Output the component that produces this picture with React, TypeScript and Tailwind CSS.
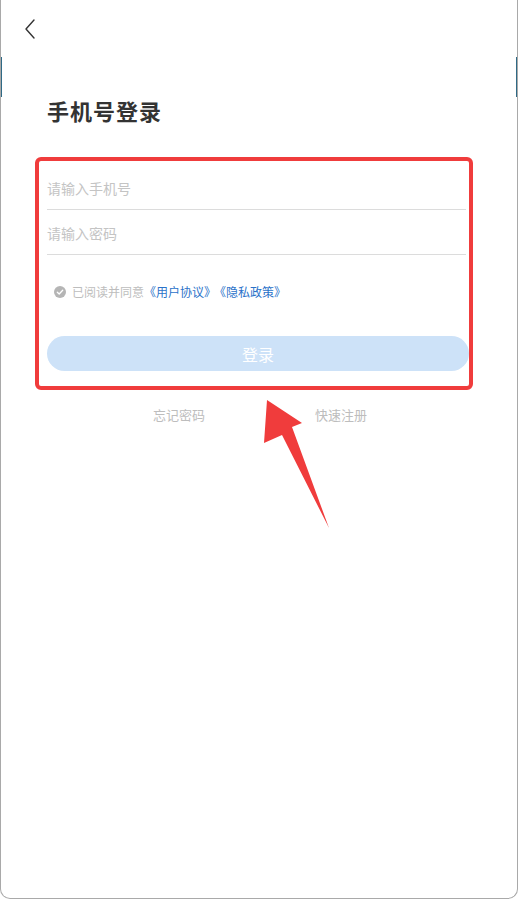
import React from "react";

const font = { fontFamily: '"Noto Sans CJK SC", "Noto Sans", sans-serif' };

const App = () => {
    return (
        <div style={font} className="relative w-[518px] h-[899px] bg-white border-x border-b border-[#a9a9a9] rounded-b-[10px] overflow-hidden">
            {/* bits of the desktop peeking past the window edge */}
            <div className="absolute left-0 top-[57px] w-px h-[40px] bg-[#2f6a86]" />
            <div className="absolute right-0 top-[57px] w-px h-[40px] bg-[#2f6a86]" />

            <div className="pt-[18px] pl-[22px]">
                <button className="text-[#333]">
                    <svg width="14" height="22" viewBox="0 0 14 22" fill="none">
                        <path d="M11 2 L3 11 L11 20" stroke="#333" strokeWidth="1.4" strokeLinecap="round" strokeLinejoin="round" />
                    </svg>
                </button>
            </div>

            <div className="pl-[46px] pr-[51px]">
                <h1 className="mt-[50px] text-[22px] leading-[30px] font-bold text-[#333] tracking-[1px]">手机号登录</h1>

                <div className="mt-[40px]">
                    <div className="h-[45px] flex items-center border-b border-[#dcdcdc]">
                        <span className="text-[14px] text-[#c4c4c4] pt-[2px]">请输入手机号</span>
                    </div>
                    <div className="h-[45px] flex items-center border-b border-[#dcdcdc]">
                        <span className="text-[14px] text-[#c4c4c4] pt-[2px]">请输入密码</span>
                    </div>
                </div>

                <div className="mt-[28px] pl-[7px] flex items-center gap-[6px] text-[12px]">
                    <svg width="12" height="12" viewBox="0 0 12 12">
                        <circle cx="6" cy="6" r="6" fill="#b5b5b5" />
                        <path d="M3.3 6.2 L5.2 8 L8.7 4.3" stroke="#fff" strokeWidth="1.3" fill="none" strokeLinecap="round" strokeLinejoin="round" />
                    </svg>
                    <span className="text-[#bdbdbd]">
                        已阅读并同意
                        <span className="text-[#2a72c9]">《用户协议》</span>
                        <span className="text-[#2a72c9] ml-[4px]">《隐私政策》</span>
                    </span>
                </div>

                <button className="mt-[35px] w-[422px] h-[35px] rounded-full bg-[#cde2f8] text-white text-[16px]">登录</button>

                <div className="mt-[34px] flex text-[13px] text-[#bdbdbd]">
                    <span className="ml-[106px]">忘记密码</span>
                    <span className="ml-[110px]">快速注册</span>
                </div>
            </div>

            {/* annotation overlay */}
            <div className="absolute left-[34px] top-[157px] w-[438px] h-[233px] border-[4px] border-[#f03c3c] rounded-[6px] pointer-events-none" />
            <svg className="absolute left-0 top-0 pointer-events-none" width="518" height="899">
                <polygon points="266,400 301,423 291,427 328,528 281,435 263,443" fill="#f03c3c" />
            </svg>
        </div>
    );
};

export default App;
